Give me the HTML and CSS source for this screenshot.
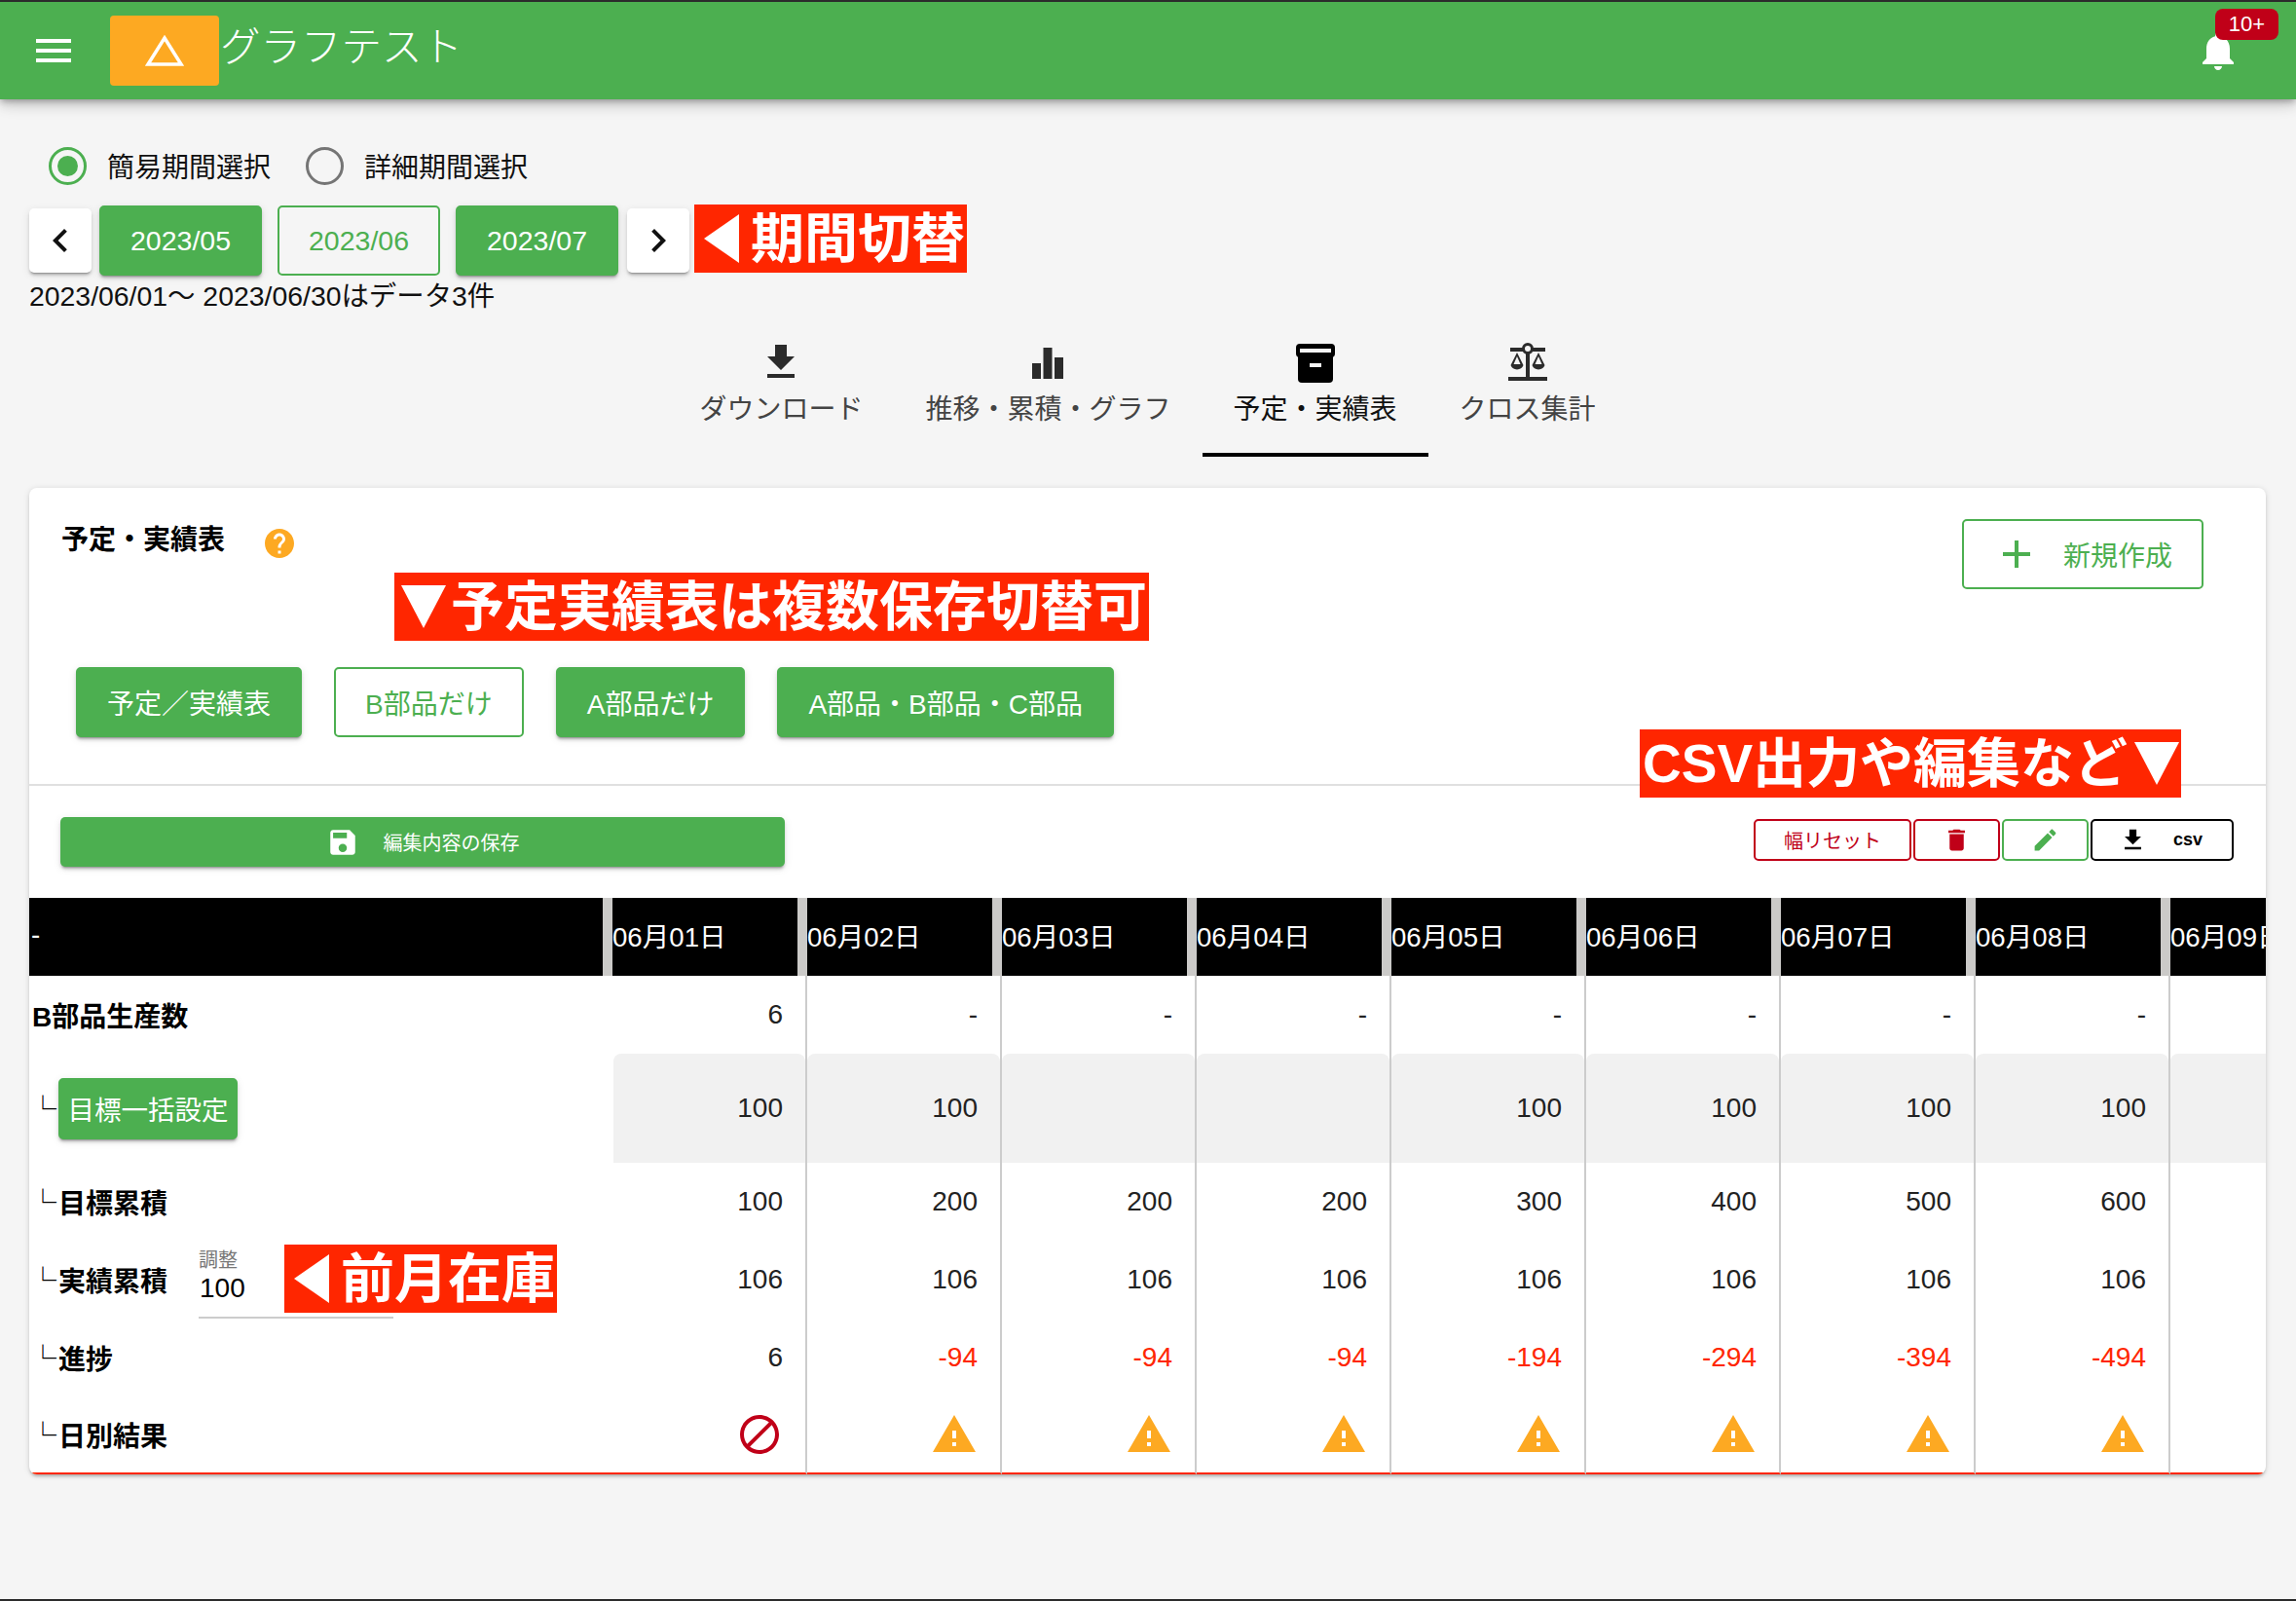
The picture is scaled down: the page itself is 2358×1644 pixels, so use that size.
FILE: index.html
```html
<!DOCTYPE html>
<html lang="ja">
<head>
    <meta charset="UTF-8">
    <meta name="viewport" content="width=device-width, initial-scale=1.0">
    <title>グラフテスト</title>
    <link rel="stylesheet" href="styles.css">
</head>
<body>
    <svg class="defs" width="0" height="0">
        <symbol id="i-warn" viewBox="0 0 24 24"><path d="M1 21h22L12 2 1 21zm12-3h-2v-2h2v2zm0-4h-2v-4h2v4z"/></symbol>
        <symbol id="i-download" viewBox="0 0 24 24"><path d="M19 9h-4V3H9v6H5l7 7 7-7zM5 18v2h14v-2H5z"/></symbol>
    </svg>

    <div class="page">
        <header class="appbar">
            <svg class="menu-icon" viewBox="0 0 24 24"><path d="M3 18h18v-2H3v2zm0-5h18v-2H3v2zm0-7v2h18V6H3z"/></svg>
            <div class="logo">
                <svg width="40" height="32" viewBox="0 0 40 32"><path d="M20 3 L37 30 H3 Z" fill="none" stroke="#fff" stroke-width="3.500"/></svg>
            </div>
            <div class="app-title">グラフテスト</div>
            <div class="bell">
                <svg class="bell-icon" viewBox="0 0 24 24"><path d="M12 22c1.1 0 2-.9 2-2h-4c0 1.1.89 2 2 2zm6-6v-5c0-3.07-1.64-5.64-4.5-6.32V4c0-.83-.67-1.5-1.5-1.5s-1.5.67-1.5 1.5v.68C7.63 5.36 6 7.92 6 11v5l-2 2v1h16v-1l-2-2z"/></svg>
                <span class="badge">10+</span>
            </div>
        </header>

        <main class="content">
            <div class="radios">
                <span class="radio checked"></span><span class="radio-label">簡易期間選択</span>
                <span class="radio"></span><span class="radio-label">詳細期間選択</span>
            </div>

            <div class="months">
                <button class="arrow"><svg viewBox="0 0 24 24"><path d="M15.41 7.41L14 6l-6 6 6 6 1.41-1.41L10.83 12z"/></svg></button>
                <button class="btn month">2023/05</button>
                <button class="btn month outline">2023/06</button>
                <button class="btn month">2023/07</button>
                <button class="arrow"><svg viewBox="0 0 24 24"><path d="M10 6L8.59 7.41 13.17 12l-4.58 4.59L10 18l6-6z"/></svg></button>
            </div>
            <div class="range">2023/06/01〜 2023/06/30はデータ3件</div>

            <nav class="tabs">
                <div class="tab">
                    <svg class="tab-icon dark" viewBox="0 0 24 24"><use href="#i-download"/></svg>
                    <span>ダウンロード</span>
                </div>
                <div class="tab">
                    <svg class="tab-icon dark" viewBox="0 0 48 48"><rect x="8" y="25" width="9" height="16"/><rect x="19.500" y="9" width="9" height="32"/><rect x="31" y="19" width="9" height="22"/></svg>
                    <span>推移・累積・グラフ</span>
                </div>
                <div class="tab active">
                    <svg class="tab-icon" viewBox="0 0 48 48">
                        <rect x="4" y="5" width="40" height="14" rx="4"/>
                        <rect x="6" y="15" width="36" height="30" rx="4"/>
                        <rect class="hole" x="8" y="10" width="32" height="4"/>
                        <rect class="hole" x="18" y="25" width="12" height="4"/>
                    </svg>
                    <span>予定・実績表</span>
                </div>
                <div class="tab">
                    <svg class="tab-icon dark" viewBox="0 0 48 48">
                        <rect x="4" y="39" width="40" height="4"/>
                        <rect x="22" y="12" width="4" height="27"/>
                        <rect x="6" y="9" width="36" height="4"/>
                        <circle class="hole" cx="24" cy="10" r="4.500" stroke="#2b2b2b" stroke-width="3"/>
                        <path d="M13 14 L6.500 27 a7 7 0 0 0 13 0 Z M13 18 L9.500 26 H16.500 Z" fill-rule="evenodd"/>
                        <path d="M35 14 L28.500 27 a7 7 0 0 0 13 0 Z M35 18 L31.500 26 H38.500 Z" fill-rule="evenodd"/>
                    </svg>
                    <span>クロス集計</span>
                </div>
            </nav>

            <section class="card">
                <div class="card-head">
                    <div class="title-row">
                        <div class="card-title">予定・実績表</div>
                        <svg class="help" viewBox="0 0 24 24"><path d="M12 2C6.48 2 2 6.48 2 12s4.480 10 10 10 10-4.480 10-10S17.520 2 12 2zm1 17h-2v-2h2v2zm2.070-7.750l-.9.920C13.450 12.900 13 13.500 13 15h-2v-.5c0-1.100.450-2.100 1.170-2.830l1.240-1.260c.370-.360.590-.860.590-1.410 0-1.100-.9-2-2-2s-2 .9-2 2H8c0-2.210 1.790-4 4-4s4 1.790 4 4c0 .880-.360 1.680-.930 2.250z"/></svg>
                        <button class="new-btn">
                            <svg viewBox="0 0 24 24"><path d="M19 13h-6v6h-2v-6H5v-2h6V5h2v6h6v2z"/></svg>
                            <span>新規作成</span>
                        </button>
                    </div>
                    <div class="presets">
                        <button class="btn preset">予定／実績表</button>
                        <button class="btn preset outline">B部品だけ</button>
                        <button class="btn preset">A部品だけ</button>
                        <button class="btn preset">A部品・B部品・C部品</button>
                    </div>
                </div>

                <div class="toolbar">
                    <button class="save-btn">
                        <svg viewBox="0 0 24 24"><path d="M17 3H5c-1.110 0-2 .9-2 2v14c0 1.100.890 2 2 2h14c1.100 0 2-.9 2-2V7l-4-4zm-5 16c-1.660 0-3-1.340-3-3s1.340-3 3-3 3 1.340 3 3-1.340 3-3 3zm3-10H5V5h10v4z"/></svg>
                        <span>編集内容の保存</span>
                    </button>
                    <div class="tools">
                        <button class="tool red wide">幅リセット</button>
                        <button class="tool red"><svg viewBox="0 0 24 24"><path d="M6 19c0 1.100.9 2 2 2h8c1.100 0 2-.9 2-2V7H6v12zM19 4h-3.500l-1-1h-5l-1 1H5v2h14V4z"/></svg></button>
                        <button class="tool green"><svg viewBox="0 0 24 24"><path d="M3 17.250V21h3.750L17.810 9.940l-3.750-3.750L3 17.250zM20.710 7.040c.390-.390.390-1.020 0-1.410l-2.340-2.340c-.390-.390-1.020-.390-1.410 0l-1.830 1.830 3.750 3.750 1.830-1.830z"/></svg></button>
                        <button class="tool black csv"><svg viewBox="0 0 24 24"><use href="#i-download"/></svg><span>csv</span></button>
                    </div>
                </div>

                <div class="table-wrap">
                    <table class="grid">
                        <thead>
                            <tr>
                                <th class="first">-</th>
                                <th>06月01日</th><th>06月02日</th><th>06月03日</th><th>06月04日</th><th>06月05日</th><th>06月06日</th><th>06月07日</th><th>06月08日</th><th>06月09日</th>
                            </tr>
                        </thead>
                        <tbody>
                            <tr>
                                <td class="first top-label">B部品生産数</td>
                                <td class="one">6</td><td>-</td><td>-</td><td>-</td><td>-</td><td>-</td><td>-</td><td>-</td><td></td>
                            </tr>
                            <tr class="goal">
                                <td class="first"><div class="sub"><span class="corner">└</span><button class="btn bulk">目標一括設定</button></div></td>
                                <td class="one"><div class="fill">100</div></td><td><div class="fill">100</div></td><td><div class="fill"></div></td><td><div class="fill"></div></td><td><div class="fill">100</div></td><td><div class="fill">100</div></td><td><div class="fill">100</div></td><td><div class="fill">100</div></td><td><div class="fill"></div></td>
                            </tr>
                            <tr>
                                <td class="first"><div class="sub"><span class="corner">└</span><b>目標累積</b></div></td>
                                <td class="one">100</td><td>200</td><td>200</td><td>200</td><td>300</td><td>400</td><td>500</td><td>600</td><td></td>
                            </tr>
                            <tr>
                                <td class="first">
                                    <div class="sub">
                                        <span class="corner">└</span><b>実績累積</b>
                                        <div class="adjust"><label>調整</label><div class="adjust-value">100</div></div>
                                    </div>
                                </td>
                                <td class="one">106</td><td>106</td><td>106</td><td>106</td><td>106</td><td>106</td><td>106</td><td>106</td><td></td>
                            </tr>
                            <tr>
                                <td class="first"><div class="sub"><span class="corner">└</span><b>進捗</b></div></td>
                                <td class="one">6</td><td class="minus">-94</td><td class="minus">-94</td><td class="minus">-94</td><td class="minus">-194</td><td class="minus">-294</td><td class="minus">-394</td><td class="minus">-494</td><td></td>
                            </tr>
                            <tr class="result">
                                <td class="first"><div class="sub"><span class="corner">└</span><b>日別結果</b></div></td>
                                <td class="one"><svg class="mark ng" viewBox="0 0 24 24"><path d="M12 2C6.480 2 2 6.480 2 12s4.480 10 10 10 10-4.480 10-10S17.520 2 12 2zM4 12c0-4.420 3.580-8 8-8 1.850 0 3.550.630 4.900 1.690L5.690 16.900C4.630 15.550 4 13.850 4 12zm8 8c-1.850 0-3.550-.630-4.900-1.690L18.310 7.100C19.370 8.450 20 10.150 20 12c0 4.420-3.580 8-8 8z"/></svg></td>
                                <td><svg class="mark warn"><use href="#i-warn"/></svg></td>
                                <td><svg class="mark warn"><use href="#i-warn"/></svg></td>
                                <td><svg class="mark warn"><use href="#i-warn"/></svg></td>
                                <td><svg class="mark warn"><use href="#i-warn"/></svg></td>
                                <td><svg class="mark warn"><use href="#i-warn"/></svg></td>
                                <td><svg class="mark warn"><use href="#i-warn"/></svg></td>
                                <td><svg class="mark warn"><use href="#i-warn"/></svg></td>
                                <td></td>
                            </tr>
                        </tbody>
                    </table>
                </div>
            </section>
        </main>

        <!-- 赤い注釈 -->
        <div class="note note-period"><svg class="tri-left" viewBox="0 0 36 50"><path d="M36 0V50L0 25z"/></svg>期間切替</div>
        <div class="note note-multi"><svg class="tri-down" viewBox="0 0 46 44"><path d="M0 0H46L23 44z"/></svg>予定実績表は複数保存切替可</div>
        <div class="note note-csv">CSV出力や編集など<svg class="tri-down" viewBox="0 0 46 44"><path d="M0 0H46L23 44z"/></svg></div>
        <div class="note note-stock"><svg class="tri-left" viewBox="0 0 36 50"><path d="M36 0V50L0 25z"/></svg>前月在庫</div>
    </div>
</body>
</html>
```

FILE: styles.css
```css
* {
    box-sizing: border-box;
}

html, body {
    margin: 0;
    padding: 0;
}

body {
    font-family: "Liberation Sans", "Noto Sans CJK JP", sans-serif;
    font-size: 28px;
    color: #111;
    background-color: #f5f5f5;
}

button {
    font-family: inherit;
    cursor: pointer;
}

.defs {
    position: absolute;
}

.page {
    position: relative;
    height: 1644px;
    overflow: hidden;
    border-top: 2px solid #2b2b2b;
    border-bottom: 2px solid #2b2b2b;
}

/* header */
.appbar {
    position: relative;
    z-index: 2;
    display: flex;
    align-items: center;
    height: 100px;
    padding-left: 31px;
    background-color: #4caf50;
    color: white;
    box-shadow: 0 3px 6px -1px rgba(0, 0, 0, 0.25), 0 6px 12px rgba(0, 0, 0, 0.14), 0 2px 20px rgba(0, 0, 0, 0.1);
}

.menu-icon {
    width: 48px;
    height: 48px;
    fill: white;
}

.logo {
    display: flex;
    align-items: center;
    justify-content: center;
    width: 112px;
    height: 72px;
    margin-left: 34px;
    border-radius: 4px;
    background-color: #fda922;
}

.app-title {
    margin: 0 0 15px 1px;
    font-size: 41.5px;
    font-weight: 300;
}

.bell {
    position: relative;
    width: 48px;
    height: 48px;
    margin: -1px 56px 0 auto;
}

.bell-icon {
    width: 48px;
    height: 48px;
    fill: white;
}

.badge {
    position: absolute;
    top: -19px;
    left: 21px;
    width: 65px;
    height: 32px;
    border-radius: 8px;
    background-color: #c00018;
    font-size: 22px;
    line-height: 32px;
    text-align: center;
}

/* period */
.content {
    padding: 48px 31px 0 30px;
}

.radios {
    display: flex;
    align-items: center;
    height: 40px;
    padding-left: 20px;
}

.radio {
    position: relative;
    width: 39px;
    height: 39px;
    border: 3px solid #757575;
    border-radius: 50%;
}

.radio.checked {
    border-color: #4caf50;
}

.radio.checked::after {
    content: "";
    position: absolute;
    top: 6px;
    left: 6px;
    width: 21px;
    height: 21px;
    border-radius: 50%;
    background-color: #4caf50;
}

.radio-label {
    width: 225px;
    padding-left: 21px;
}

.months {
    display: flex;
    align-items: center;
    height: 72px;
    margin-top: 21px;
}

.btn {
    border: 2px solid #4caf50;
    border-radius: 5px;
    background-color: #4caf50;
    color: white;
    font-size: 28px;
    padding: 0;
    box-shadow: 0 3px 2px -2px rgba(0, 0, 0, 0.3), 0 3px 3px rgba(0, 0, 0, 0.14), 0 2px 8px rgba(0, 0, 0, 0.1);
}

.btn.outline {
    background-color: transparent;
    color: #4caf50;
    box-shadow: none;
}

.month {
    width: 167px;
    height: 72px;
    margin-right: 16px;
    font-size: 28.5px;
}

.arrow {
    width: 64px;
    height: 66px;
    margin-right: 8px;
    padding: 8px;
    border: none;
    border-radius: 5px;
    background-color: white;
    box-shadow: 0 3px 2px -2px rgba(0, 0, 0, 0.3), 0 3px 3px rgba(0, 0, 0, 0.14), 0 2px 8px rgba(0, 0, 0, 0.1);
}

.arrow svg {
    display: block;
    width: 48px;
    height: 48px;
    fill: #111;
}

.month + .arrow {
    margin-left: -7px;
}

.range {
    margin-top: 4px;
    font-size: 28.4px;
    line-height: 34px;
}

/* tabs */
.tabs {
    display: flex;
    justify-content: center;
    margin-top: 27px;
}

.tab {
    display: flex;
    flex-direction: column;
    align-items: center;
    height: 121px;
    padding: 0 32px;
    color: #444;
}

.tab span {
    margin-top: 5px;
    line-height: 40px;
}

.tab.active {
    border-bottom: 4px solid #000;
    color: #111;
}

.tab-icon {
    width: 48px;
    height: 48px;
    fill: #000;
}

.tab-icon.dark {
    fill: #2b2b2b;
}

.tab-icon .hole {
    fill: #f5f5f5;
}

/* card */
.card {
    height: 1013px;
    margin-top: 32px;
    overflow: hidden;
    border-radius: 8px;
    background-color: white;
    box-shadow: 0 3px 3px -1px rgba(0, 0, 0, 0.22), 0 1px 6px rgba(0, 0, 0, 0.14);
}

.card-head {
    height: 306px;
    padding: 32px 64px 0 33px;
    border-bottom: 2px solid #e0e0e0;
}

.title-row {
    display: flex;
    align-items: flex-start;
    height: 72px;
}

.card-title {
    margin-top: 2px;
    font-weight: bold;
    line-height: 40px;
    color: #000;
}

.help {
    width: 36px;
    height: 36px;
    margin: 7px 0 0 38px;
    fill: #fda922;
}

.new-btn {
    display: flex;
    align-items: center;
    width: 248px;
    height: 72px;
    margin-left: auto;
    padding: 0 0 0 30px;
    border: 2px solid #4caf50;
    border-radius: 5px;
    background-color: white;
    color: #4caf50;
    font-size: 28px;
}

.new-btn svg {
    width: 48px;
    height: 48px;
    margin-right: 24px;
    fill: #4caf50;
}

.presets {
    display: flex;
    margin: 80px 0 0 15px;
    gap: 33px;
}

.preset {
    height: 72px;
    padding: 0 30px;
}

.toolbar {
    display: flex;
    justify-content: space-between;
    height: 115px;
    padding: 32px 33px 0 32px;
}

.save-btn {
    display: flex;
    align-items: center;
    justify-content: center;
    width: 744px;
    height: 51px;
    padding: 0;
    border: none;
    border-radius: 5px;
    background-color: #4caf50;
    color: white;
    font-size: 20px;
    box-shadow: 0 3px 2px -2px rgba(0, 0, 0, 0.3), 0 3px 3px rgba(0, 0, 0, 0.14), 0 2px 8px rgba(0, 0, 0, 0.1);
}

.save-btn svg {
    width: 34px;
    height: 34px;
    margin-right: 25px;
    fill: white;
}

.tools {
    display: flex;
    gap: 2px;
    margin-top: 2px;
}

.tool {
    display: flex;
    align-items: center;
    justify-content: center;
    width: 89px;
    height: 43px;
    padding: 0;
    border: 2px solid;
    border-radius: 5px;
    background-color: white;
    font-size: 20px;
}

.tool svg {
    width: 29px;
    height: 29px;
    fill: currentColor;
}

.tool.red {
    color: #c00018;
}

.tool.green {
    color: #4caf50;
}

.tool.black {
    color: #000;
}

.tool.wide {
    width: 162px;
}

.tool.csv {
    width: 147px;
    padding-right: 3px;
}

.tool.csv span {
    margin-left: 27px;
    font-size: 18px;
    font-weight: bold;
}

/* table */
.table-wrap {
    overflow: hidden;
}

.grid {
    table-layout: fixed;
    width: 2399px;
    border-collapse: separate;
    border-spacing: 0;
    font-size: 28px;
}

.grid th {
    width: 200px;
    height: 80px;
    padding: 0 0 4px;
    border-right: 10px solid #cbcac8;
    background-color: #000;
    color: white;
    font-weight: normal;
    font-size: 27.6px;
    text-align: left;
    white-space: nowrap;
    overflow: hidden;
}

.grid th.first {
    width: 599px;
    padding-left: 2px;
}

.grid td {
    height: 80px;
    padding: 0 23px 0 0;
    border-right: 2px solid #ccc;
    text-align: right;
    color: #222;
}

.grid td.first {
    padding: 0;
    border-right: none;
    text-align: left;
    color: #000;
}

.grid td.top-label {
    padding-left: 3px;
    font-weight: bold;
}

.grid .goal td {
    height: 112px;
    padding: 0;
}

.fill {
    display: flex;
    align-items: center;
    justify-content: flex-end;
    height: 112px;
    padding-right: 23px;
    border-radius: 8px 8px 0 0;
    background-color: #f1f1f1;
}

.grid .goal td.one .fill {
    margin-left: 1px;
}

.grid .result td {
    border-bottom: 2px solid #ff2600;
}

.sub {
    display: flex;
    align-items: center;
}

.corner {
    flex: none;
    width: 30px;
    font-family: "Noto Sans CJK JP", sans-serif;
    font-size: 28px;
    font-weight: bold;
    line-height: 40px;
}

.bulk {
    width: 184px;
    height: 63px;
    font-size: 27.5px;
    white-space: nowrap;
}

.adjust {
    width: 200px;
    height: 72px;
    margin: 8px 0 0 32px;
    border-bottom: 2px solid #ccc;
}

.adjust label {
    display: block;
    font-size: 20px;
    line-height: 24px;
    color: #777;
}

.adjust-value {
    padding-left: 1px;
    font-size: 28px;
    line-height: 34px;
}

.minus {
    color: #ff2600 !important;
}

.mark {
    display: block;
    width: 48px;
    height: 48px;
    margin-left: auto;
}

.mark.ng {
    fill: #c00018;
}

.mark.warn {
    fill: #fda922;
}

/* annotations */
.note {
    position: absolute;
    display: flex;
    align-items: center;
    height: 70px;
    background-color: #ff2600;
    color: white;
    font-family: "Liberation Sans", "Noto Sans CJK JP", sans-serif;
    font-size: 55px;
    font-weight: bold;
    line-height: 70px;
    white-space: nowrap;
}

.note svg {
    fill: white;
    flex: none;
}

.tri-left {
    width: 36px;
    height: 50px;
    margin: 0 12px 0 10px;
}

.tri-down {
    width: 46px;
    height: 44px;
}

.note-period {
    left: 713px;
    top: 208px;
    width: 280px;
}

.note-multi {
    left: 405px;
    top: 586px;
    width: 775px;
}

.note-multi .tri-down {
    margin: 0 5px 0 7px;
}

.note-csv {
    left: 1684px;
    top: 747px;
    width: 556px;
    padding-left: 3px;
}

.note-csv .tri-down {
    margin-left: 7px;
}

.note-stock {
    left: 292px;
    top: 1276px;
    width: 280px;
}
```
